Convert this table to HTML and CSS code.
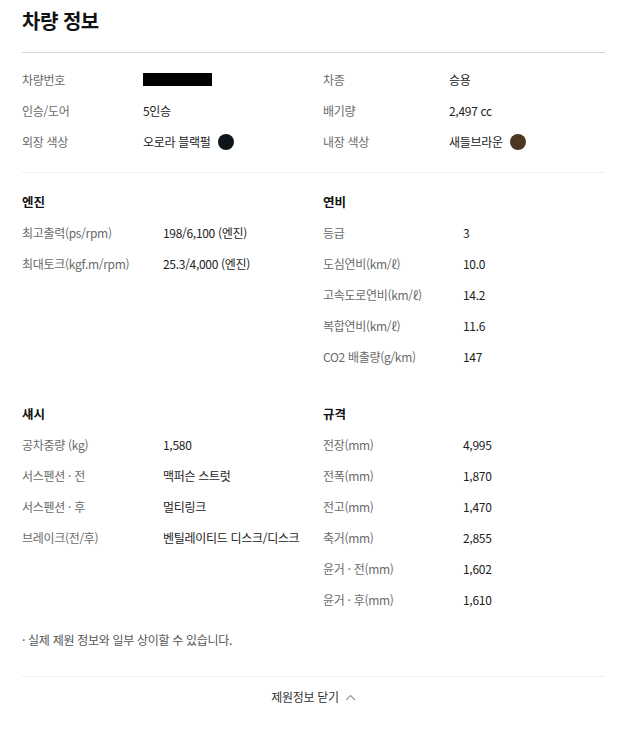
FILE: index.html
```html
<!DOCTYPE html>
<html lang="ko">
<head>
<meta charset="utf-8">
<link rel="stylesheet" href="styles.css">
</head>
<body>
<div class="page">
  <header class="head">
    <h1 class="title">차량 정보</h1>
  </header>

  <section class="info">
    <div class="lbl">차량번호</div>
    <div class="val"><span class="redact"></span></div>
    <div class="lbl">차종</div>
    <div class="val">승용</div>

    <div class="lbl">인승/도어</div>
    <div class="val">5인승</div>
    <div class="lbl">배기량</div>
    <div class="val">2,497 cc</div>

    <div class="lbl">외장 색상</div>
    <div class="val">오로라 블랙펄<span class="dot dot-black"></span></div>
    <div class="lbl">내장 색상</div>
    <div class="val">새들브라운<span class="dot dot-brown"></span></div>
  </section>

  <section class="spec">
    <div class="col">
      <div class="hd">엔진</div>
      <div class="row"><span class="lbl">최고출력(ps/rpm)</span><span class="val">198/6,100 (엔진)</span></div>
      <div class="row"><span class="lbl">최대토크(kgf.m/rpm)</span><span class="val">25.3/4,000 (엔진)</span></div>
    </div>
    <div class="col">
      <div class="hd">연비</div>
      <div class="row"><span class="lbl">등급</span><span class="val">3</span></div>
      <div class="row"><span class="lbl">도심연비(km/ℓ)</span><span class="val">10.0</span></div>
      <div class="row"><span class="lbl">고속도로연비(km/ℓ)</span><span class="val">14.2</span></div>
      <div class="row"><span class="lbl">복합연비(km/ℓ)</span><span class="val">11.6</span></div>
      <div class="row"><span class="lbl">CO2 배출량(g/km)</span><span class="val">147</span></div>
    </div>
  </section>

  <section class="spec spec-2">
    <div class="col">
      <div class="hd">섀시</div>
      <div class="row"><span class="lbl">공차중량 (kg)</span><span class="val">1,580</span></div>
      <div class="row"><span class="lbl">서스펜션 · 전</span><span class="val">맥퍼슨 스트럿</span></div>
      <div class="row"><span class="lbl">서스펜션 · 후</span><span class="val">멀티링크</span></div>
      <div class="row"><span class="lbl">브레이크(전/후)</span><span class="val">벤틸레이티드 디스크/디스크</span></div>
    </div>
    <div class="col">
      <div class="hd">규격</div>
      <div class="row"><span class="lbl">전장(mm)</span><span class="val">4,995</span></div>
      <div class="row"><span class="lbl">전폭(mm)</span><span class="val">1,870</span></div>
      <div class="row"><span class="lbl">전고(mm)</span><span class="val">1,470</span></div>
      <div class="row"><span class="lbl">축거(mm)</span><span class="val">2,855</span></div>
      <div class="row"><span class="lbl">윤거 · 전(mm)</span><span class="val">1,602</span></div>
      <div class="row"><span class="lbl">윤거 · 후(mm)</span><span class="val">1,610</span></div>
    </div>
  </section>

  <p class="note">· 실제 제원 정보와 일부 상이할 수 있습니다.</p>

  <div class="close">
    <span class="close-btn">제원정보 닫기
      <svg class="chev" width="11" height="7" viewBox="0 0 11 7"><polyline points="1,6 5.5,1.5 10,6" fill="none" stroke="#9a9a9a" stroke-width="1.2"/></svg>
    </span>
  </div>
</div>
</body>
</html>
```

FILE: styles.css
```css
* { box-sizing: border-box; }
html, body { margin: 0; padding: 0; background: #fff; }
body {
  font-family: "Noto Sans CJK KR", "Noto Sans", sans-serif;
  font-size: 12px;
  color: #222;
}
.page { padding: 0 15px 0 22px; }

.head {
  height: 53px;
  border-bottom: 1px solid #d4d4d4;
  padding-top: 6px;
}
.title {
  margin: 0;
  font-size: 20px;
  line-height: 30px;
  font-weight: 700;
  color: #111;
  letter-spacing: -0.5px;
}

.info {
  display: grid;
  grid-template-columns: 121px 180px 126px 1fr;
  grid-auto-rows: 31px;
  align-items: center;
  padding: 11px 0 15px;
  border-bottom: 1px solid #efefef;
}
.lbl { color: #6a6a6a; letter-spacing: -0.3px; }
.val { color: #222; display: flex; align-items: center; letter-spacing: -0.3px; }
.redact { display: inline-block; width: 69px; height: 13px; background: #000; }
.dot { display: inline-block; width: 16px; height: 16px; border-radius: 50%; margin-left: 7px; }
.dot-black { background: #0e1418; }
.dot-brown { background: #4b3722; }

.spec {
  display: grid;
  grid-template-columns: 301px 1fr;
  padding-top: 13px;
}
.spec-2 { padding-top: 26px; }
.col .hd {
  height: 31px;
  line-height: 31px;
  font-size: 12.5px;
  font-weight: 700;
  color: #111;
}
.row {
  display: grid;
  grid-template-columns: 141px 1fr;
  height: 31px;
  align-items: center;
}
.col + .col .row { grid-template-columns: 140px 1fr; }

.note {
  margin: 16px 0 0;
  line-height: 18px;
  color: #555;
  letter-spacing: -0.3px;
  padding-bottom: 27px;
  border-bottom: 1px solid #efefef;
}

.close {
  display: flex;
  justify-content: center;
  padding-top: 10px;
}
.close-btn {
  display: inline-flex;
  align-items: center;
  gap: 6px;
  line-height: 20px;
  color: #333;
  letter-spacing: -0.3px;
}
.chev { display: block; }
```
